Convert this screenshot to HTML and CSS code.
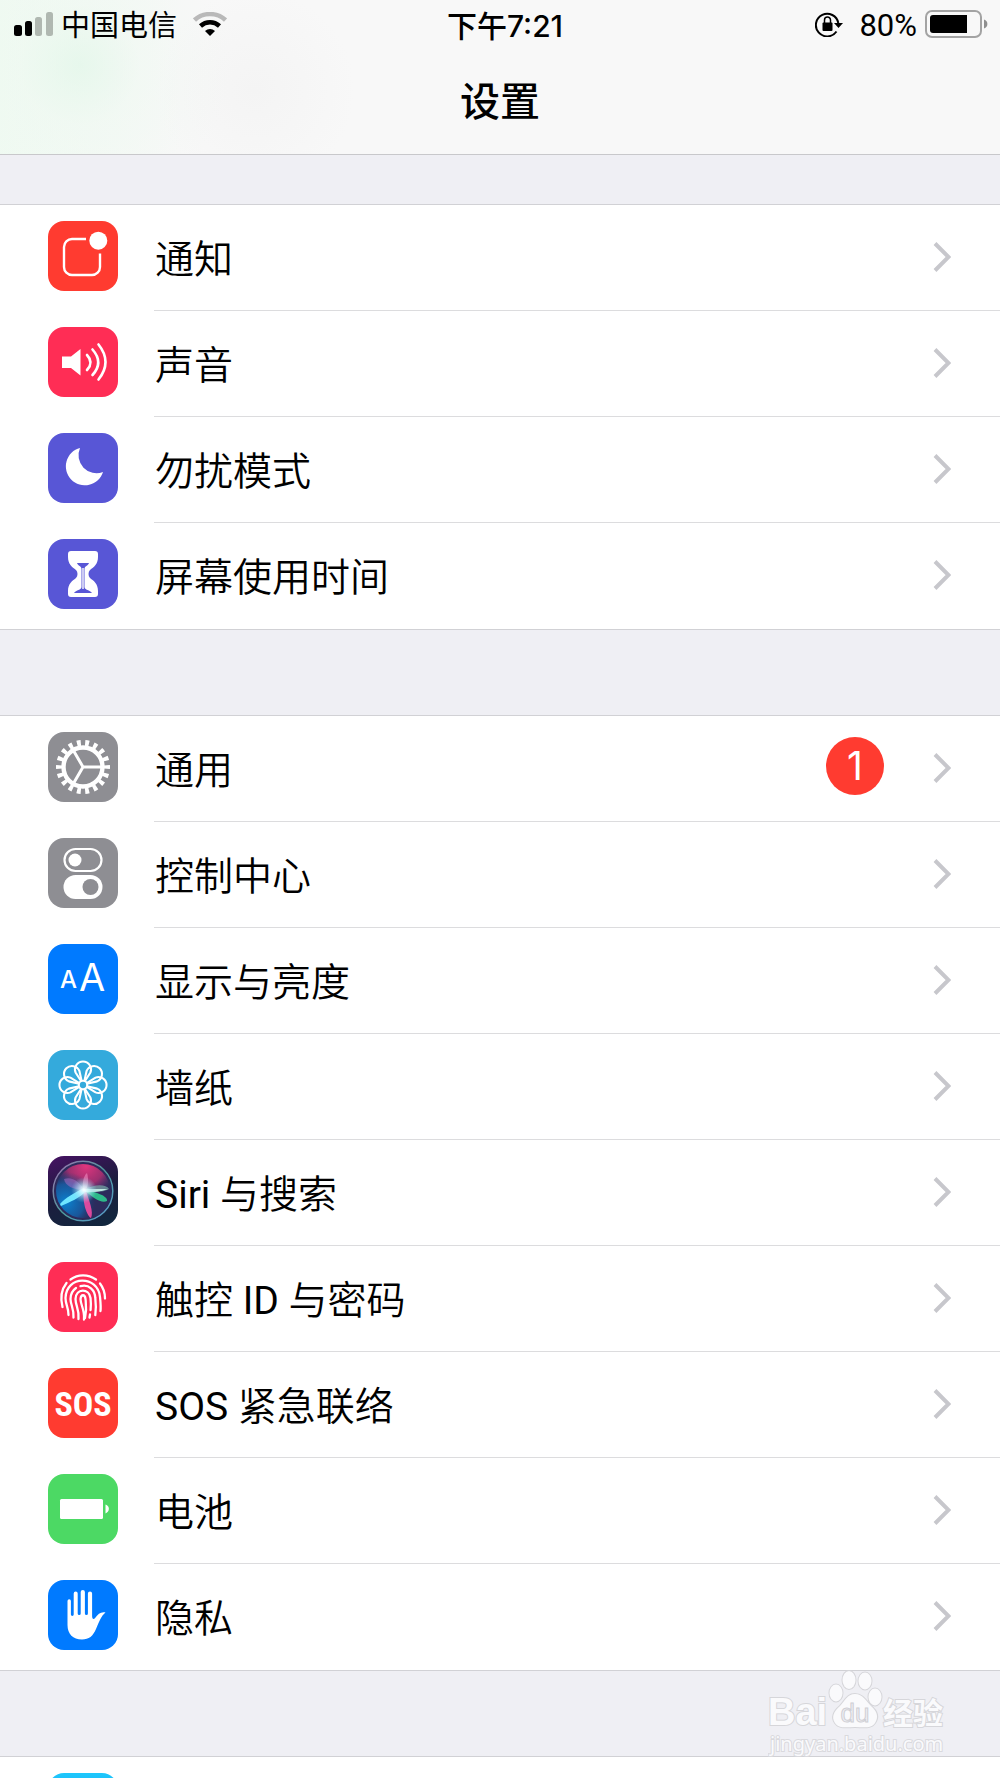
FILE: index.html
```
<!DOCTYPE html>
<html lang="zh-CN">
<head>
    <meta charset="UTF-8">
    <meta name="viewport" content="width=device-width, initial-scale=1.0">
    <title>设置</title>
    <link rel="stylesheet" href="styles.css">
</head>
<body>
    <!-- 公用箭头 -->
    <svg class="defs" aria-hidden="true">
        <symbol id="chevron" viewBox="0 0 18 30">
            <path d="M2 1.500L15.500 15L2 28.500" fill="none" stroke="#c7c7cc" stroke-width="4"/>
        </symbol>
    </svg>

    <header class="header">
        <div class="status-bar">
            <div class="status-left">
                <svg class="signal" viewBox="0 0 39 24">
                    <rect x="0" y="13" width="8" height="11" rx="2.500"/>
                    <rect x="11" y="9" width="7" height="15" rx="2.500"/>
                    <rect x="21" y="5" width="7" height="19" rx="2.500" fill="#b0b8b1"/>
                    <rect x="32" y="0" width="7" height="24" rx="2.500" fill="#b0b8b1"/>
                </svg>
                <span class="status-text">中国电信</span>
                <svg class="wifi" viewBox="0 0 34 24">
                    <path d="M1.500 8C10 .1 24 .1 32.500 8" fill="none" stroke="#b9b9b9" stroke-width="4.500"/>
                    <path d="M7.500 14C13 9 21 9 26.500 14" fill="none" stroke="#000" stroke-width="4.500"/>
                    <path d="M12 19C15 16.300 19 16.300 22 19L17 24Z"/>
                </svg>
            </div>
            <div class="status-text status-time">下午7:21</div>
            <div class="status-right">
                <svg class="lock" viewBox="0 0 28 26">
                    <path d="M21.500 20.500A11.300 11.300 0 1 1 23.300 12" fill="none" stroke="#000" stroke-width="2"/>
                    <path d="M19 12H28L23.500 17Z"/>
                    <rect x="7.500" y="11.500" width="10" height="8.500" rx="1"/>
                    <path d="M9.500 12V9a3 3 0 0 1 6 0V12" fill="none" stroke="#000" stroke-width="1.500"/>
                </svg>
                <span class="status-text">80%</span>
                <svg class="battery" viewBox="0 0 63 28">
                    <rect x="1" y="1" width="55" height="26" rx="6" fill="none" stroke="#a3a3a3" stroke-width="2"/>
                    <path d="M8 5H42V23H8a3 3 0 0 1-3-3V8a3 3 0 0 1 3-3Z"/>
                    <path d="M59 9.500C63.500 11 63.500 17 59 18.500Z" fill="#8f8f8f"/>
                </svg>
            </div>
        </div>
        <h1 class="title">设置</h1>
    </header>

    <main class="content">
        <ul class="group">
            <li><a class="row" href="#">
                <svg class="icon red" viewBox="0 0 70 70">
                    <path d="M38 18H24a8 8 0 0 0-8 8v20a8 8 0 0 0 8 8h20a8 8 0 0 0 8-8V32.500" fill="none" stroke="#fff" stroke-width="2.400"/>
                    <circle cx="50.300" cy="19.700" r="9" fill="#fff"/>
                </svg>
                <span class="row-body"><span class="label">通知</span><svg class="chevron"><use href="#chevron"/></svg></span>
            </a></li>
            <li><a class="row" href="#">
                <svg class="icon pink" viewBox="0 0 70 70">
                    <path d="M14 29.500h9l9.500-7.500v26.500L23 41h-9z" fill="#fff"/>
                    <path d="M39 28q7 7.500 0 15M44.500 22.500q11.500 13 0 25.500M50.500 17.500q14 17.500 0 35" fill="none" stroke="#fff" stroke-width="2.600" stroke-linecap="round"/>
                </svg>
                <span class="row-body"><span class="label">声音</span><svg class="chevron"><use href="#chevron"/></svg></span>
            </a></li>
            <li><a class="row" href="#">
                <svg class="icon purple" viewBox="0 0 70 70">
                    <path d="M32 15A19 19 0 1 0 55 39A18 18 0 0 1 32 15Z" fill="#fff"/>
                </svg>
                <span class="row-body"><span class="label">勿扰模式</span><svg class="chevron"><use href="#chevron"/></svg></span>
            </a></li>
            <li><a class="row" href="#">
                <svg class="icon purple" viewBox="0 0 70 70">
                    <path d="M23 12h24c2 0 3 1 3 3v3c0 7-4 10-8 13-2 2-2 6 0 8 4 3 8 6 8 13v3c0 2-1 3-3 3H23c-2 0-3-1-3-3v-3c0-7 4-10 8-13 2-2 2-6 0-8-4-3-8-6-8-13v-3c0-2 1-3 3-3z" fill="#fff"/>
                    <path d="M29 24h12c-1 3-4.500 3-4.500 6v18c0 3 5.500 3 7.500 6h-18c2-3 7.500-3 7.500-6V30c0-3-3.500-3-4.500-6z" fill="#5856d6"/>
                    <path d="M35 29v21" stroke="#fff" stroke-width="1.400"/>
                </svg>
                <span class="row-body"><span class="label">屏幕使用时间</span><svg class="chevron"><use href="#chevron"/></svg></span>
            </a></li>
        </ul>

        <ul class="group">
            <li><a class="row" href="#">
                <svg class="icon gray" viewBox="0 0 70 70">
                    <g fill="none" stroke="#fff">
                        <circle cx="35" cy="35" r="24" stroke-width="6" pathLength="180" stroke-dasharray="4.600 5.400" stroke-dashoffset="2.300"/>
                        <circle cx="35" cy="35" r="19.500" stroke-width="4.400"/>
                        <path d="M35 35H53M35 35L26 19.400M35 35L26 50.600" stroke-width="3"/>
                    </g>
                </svg>
                <span class="row-body"><span class="label">通用</span><span class="badge">1</span><svg class="chevron"><use href="#chevron"/></svg></span>
            </a></li>
            <li><a class="row" href="#">
                <svg class="icon gray" viewBox="0 0 70 70">
                    <rect x="16.500" y="11" width="37" height="22" rx="11" fill="none" stroke="#fff" stroke-width="2.200"/>
                    <circle cx="27" cy="22" r="6.500" fill="#fff"/>
                    <rect x="15.500" y="37" width="39" height="24" rx="12" fill="#fff"/>
                    <circle cx="42.500" cy="49" r="8" fill="#8e8e93"/>
                </svg>
                <span class="row-body"><span class="label">控制中心</span><svg class="chevron"><use href="#chevron"/></svg></span>
            </a></li>
            <li><a class="row" href="#">
                <svg class="icon blue" viewBox="0 0 70 70">
                    <text class="small-a" x="12" y="44">A</text>
                    <text class="big-a" x="31" y="47">A</text>
                </svg>
                <span class="row-body"><span class="label">显示与亮度</span><svg class="chevron"><use href="#chevron"/></svg></span>
            </a></li>
            <li><a class="row" href="#">
                <svg class="icon cyan" viewBox="0 0 70 70">
                    <defs>
                        <path id="petal" d="M33.200 31.300L27.600 22.500A8 8 0 1 1 42.400 22.500L36.800 31.300"/>
                    </defs>
                    <g fill="none" stroke="#fff" stroke-width="2.100">
                        <circle cx="35" cy="35" r="4.200"/>
                        <use href="#petal"/>
                        <use href="#petal" transform="rotate(45 35 35)"/>
                        <use href="#petal" transform="rotate(90 35 35)"/>
                        <use href="#petal" transform="rotate(135 35 35)"/>
                        <use href="#petal" transform="rotate(180 35 35)"/>
                        <use href="#petal" transform="rotate(225 35 35)"/>
                        <use href="#petal" transform="rotate(270 35 35)"/>
                        <use href="#petal" transform="rotate(315 35 35)"/>
                    </g>
                </svg>
                <span class="row-body"><span class="label">墙纸</span><svg class="chevron"><use href="#chevron"/></svg></span>
            </a></li>
            <li><a class="row" href="#">
                <svg class="icon siri" viewBox="0 0 70 70">
                    <defs>
                        <radialGradient id="siriPink" cx="38" cy="10" r="30" gradientUnits="userSpaceOnUse">
                            <stop offset="0" stop-color="#e0367e"/>
                            <stop offset=".6" stop-color="#b03072" stop-opacity=".85"/>
                            <stop offset="1" stop-color="#7a2f7c" stop-opacity="0"/>
                        </radialGradient>
                        <radialGradient id="siriBlue" cx="18" cy="46" r="30" gradientUnits="userSpaceOnUse">
                            <stop offset="0" stop-color="#0a82d0"/>
                            <stop offset=".6" stop-color="#1560a8" stop-opacity=".8"/>
                            <stop offset="1" stop-color="#1a3a70" stop-opacity="0"/>
                        </radialGradient>
                        <radialGradient id="siriGlow" cx="36" cy="34" r="13" gradientUnits="userSpaceOnUse">
                            <stop offset="0" stop-color="#fff"/>
                            <stop offset=".3" stop-color="#d8f8ff" stop-opacity=".8"/>
                            <stop offset="1" stop-color="#7fd0f0" stop-opacity="0"/>
                        </radialGradient>
                        <linearGradient id="siriRing" x1="0" y1="0" x2="1" y2="1">
                            <stop offset="0" stop-color="#a070b0"/>
                            <stop offset=".5" stop-color="#4f9a9c"/>
                            <stop offset="1" stop-color="#5a9ad0"/>
                        </linearGradient>
                    </defs>
                    <circle cx="35" cy="35" r="29" fill="#2c2b5c"/>
                    <circle cx="35" cy="35" r="27" fill="url(#siriPink)"/>
                    <circle cx="35" cy="35" r="27" fill="url(#siriBlue)"/>
                    <path d="M37 34C48 36 60 40 59 45C54 48 44 42 37 34Z" fill="#2ec98e" opacity=".9"/>
                    <path d="M36 34C46 28 58 28 61 33C54 37 44 36 36 34Z" fill="#78a8a8" opacity=".7"/>
                    <path d="M36 34C26 34 17 30 16 23C24 20 32 26 36 34Z" fill="#b070c8" opacity=".5"/>
                    <path d="M35 34C34 26 36 19 39 17C41 24 40 30 38 34Z" fill="#f088c0" opacity=".6"/>
                    <path d="M36 35C34 46 39 60 43 62C46 56 41 44 38 35Z" fill="#ef4ba2" opacity=".9"/>
                    <path d="M36 32C28 36 17 42 12 48L13 50C22 46 32 42 38 35Z" fill="#6fe6ff"/>
                    <path d="M37 33C46 33 54 33 60 33C54 35 46 37 37 36Z" fill="#d4fff4" opacity=".8"/>
                    <circle cx="36" cy="34" r="13" fill="url(#siriGlow)"/>
                    <circle cx="35" cy="35" r="29.800" fill="none" stroke="url(#siriRing)" stroke-width="1.500"/>
                </svg>
                <span class="row-body"><span class="label"><span class="latin">Siri </span>与搜索</span><svg class="chevron"><use href="#chevron"/></svg></span>
            </a></li>
            <li><a class="row" href="#">
                <svg class="icon pink" viewBox="0 0 70 70">
                    <g fill="none" stroke="#fff" stroke-width="2.300" stroke-linecap="round">
                        <path d="M22.500 17.500C30 12 40 12 48 17.500"/>
                        <path d="M18.500 21C13 28 12 35 14.500 45"/>
                        <path d="M52 21.500C55.500 26 57 31 57 36.500"/>
                        <path d="M20.500 53C20.500 45 17.500 43 17.500 36C18 13 50 13 52 35C52.500 40 53 44 52.500 49"/>
                        <path d="M25.500 55.500C26 46 22.500 43 22.500 37C22.500 32 24.500 28.500 28 26"/>
                        <path d="M32.500 24.200C41 22 47 28 47.300 36C48 42 48 48 47.300 53"/>
                        <path d="M30.500 57C31.500 47 27.500 44 27.500 37C28 26 41 26 42.500 36C43 40 43 44 42.600 48"/>
                        <path d="M36 57.500C37 48 32.500 43 32.500 37C33 32 37 32 37.500 37C38 42 39 47 37 56"/>
                        <path d="M42 52.500L41.500 55.500"/>
                    </g>
                </svg>
                <span class="row-body"><span class="label">触控<span class="latin"> ID </span>与密码</span><svg class="chevron"><use href="#chevron"/></svg></span>
            </a></li>
            <li><a class="row" href="#">
                <svg class="icon red" viewBox="0 0 70 70">
                    <text class="sos" x="35" y="48" text-anchor="middle">SOS</text>
                </svg>
                <span class="row-body"><span class="label"><span class="latin">SOS </span>紧急联络</span><svg class="chevron"><use href="#chevron"/></svg></span>
            </a></li>
            <li><a class="row" href="#">
                <svg class="icon green" viewBox="0 0 70 70">
                    <rect x="12" y="25" width="43" height="20" rx="1.500" fill="#fff"/>
                    <path d="M57.500 30.500C62 32 62 37.500 57.500 39.500Z" fill="#fff"/>
                </svg>
                <span class="row-body"><span class="label">电池</span><svg class="chevron"><use href="#chevron"/></svg></span>
            </a></li>
            <li><a class="row" href="#">
                <svg class="icon blue" viewBox="0 0 70 70">
                    <path d="M19.500 21a1.700 1.700 0 0 1 3.400 0V34.500a1.300 1.300 0 0 0 2.800 0V13.500a2 2 0 0 1 4 0V33.500a1.500 1.500 0 0 0 3 0V12a2.100 2.100 0 0 1 4.200 0V33.500a1.500 1.500 0 0 0 3 0V13.500a2.100 2.100 0 0 1 4.200 0V36c0 3 1.500 4 3 2C50 34 53 31.500 57.500 32.500C53 36 51 42 48 49C45 56 41 59.500 34 59.500C25 59.500 19.500 54 19.500 45Z" fill="#fff"/>
                </svg>
                <span class="row-body"><span class="label">隐私</span><svg class="chevron"><use href="#chevron"/></svg></span>
            </a></li>
        </ul>

        <ul class="group">
            <li><a class="row" href="#" aria-label="App Store">
                <svg class="icon store" viewBox="0 0 70 70"></svg>
                <span class="row-body"></span>
            </a></li>
        </ul>
    </main>

    <!-- 右下角水印 -->
    <svg class="watermark" viewBox="0 0 200 100">
        <g class="mark">
            <text class="mark-bai" x="0" y="55">Bai</text>
            <ellipse cx="68" cy="23" rx="6.500" ry="8.500"/>
            <ellipse cx="81" cy="10" rx="6.500" ry="9"/>
            <ellipse cx="97" cy="11" rx="6.500" ry="8.500"/>
            <ellipse cx="107" cy="27" rx="6.500" ry="8.500"/>
            <path d="M87 24C95 24 98 31 103 36C109 41 111 47 107 53C103 59 95 57 87 57C79 57 71 59 67 53C63 47 66 41 72 36C77 31 79 24 87 24Z"/>
            <text class="mark-cn" x="115" y="54">经验</text>
        </g>
        <text class="mark-du" x="87" y="52" text-anchor="middle">du</text>
        <text class="mark-url" x="2" y="81">jingyan.baidu.com</text>
    </svg>
</body>
</html>
```
FILE: styles.css
```
* {
    box-sizing: border-box;
}
body {
    margin: 0;
    height: 100vh;
    display: flex;
    flex-direction: column;
    overflow: hidden;
    position: relative;
    background: #efeff4;
    color: #000;
    font-family: Inter, "Noto Sans CJK SC", sans-serif;
}
.defs {
    display: none;
}

/* 顶部 */
.header {
    flex: none;
    border-bottom: 1px solid #c8c8cb;
    background:
        radial-gradient(circle at 80px 65px, rgba(222, 246, 230, 0.6), rgba(236, 248, 239, 0.4) 60px, rgba(248, 248, 248, 0) 150px),
        radial-gradient(circle at 255px 90px, #f4f4f4, rgba(248, 248, 248, 0) 100px),
        linear-gradient(to right, #f0faf2, #f8f8f8 180px);
}
.status-bar {
    display: grid;
    grid-template-columns: 1fr auto 1fr;
    align-items: center;
    height: 48px;
    padding: 0 12px 0 14px;
    font-size: 29px;
    line-height: 44px;
}
.status-left,
.status-right {
    display: flex;
    align-items: center;
}
.status-left {
    gap: 8px;
}
.status-right {
    justify-content: flex-end;
    gap: 8px;
    font-family: Roboto, sans-serif;
    font-size: 31px;
}
.status-text {
    padding-top: 4px;
}
.status-time {
    padding-left: 8px;
    font-size: 30px;
    font-weight: 500;
}
.signal {
    width: 39px;
    height: 24px;
}
.wifi {
    width: 34px;
    height: 24px;
    margin-left: 8px;
}
.lock {
    width: 28px;
    height: 26px;
    margin-right: 8px;
}
.battery {
    width: 63px;
    height: 28px;
}
.title {
    margin: 0;
    padding: 14px 0 12px;
    text-align: center;
    font-size: 40px;
    font-weight: 500;
    line-height: 80px;
}

/* 列表 */
.content {
    flex: 1;
    min-height: 0;
    padding-top: 49px;
    overflow: hidden;
}
.group {
    list-style: none;
    margin: 0 0 85px;
    padding: 0;
    background: #fff;
    border-top: 1px solid #d1d1d5;
    border-bottom: 1px solid #d1d1d5;
}
.row {
    display: flex;
    padding-left: 48px;
    gap: 36px;
    color: inherit;
    text-decoration: none;
}
.row-body {
    flex: 1;
    display: flex;
    align-items: center;
    height: 106px;
    padding: 0 49px 2px 1px;
    border-bottom: 1px solid #dcdcde;
}
.group li:last-child .row-body {
    border-bottom-color: transparent;
}
.label {
    flex: 1;
    padding-top: 6px;
    font-family: Roboto, "Noto Sans CJK SC", sans-serif;
    font-size: 39px;
    font-weight: 350;
    line-height: 60px;
}
.latin {
    font-weight: 400;
}
.chevron {
    width: 18px;
    height: 30px;
}
.badge {
    width: 58px;
    height: 58px;
    margin-right: 49px;
    margin-bottom: 4px;
    border-radius: 50%;
    background: #ff3b30;
    color: #fff;
    font-size: 39px;
    line-height: 58px;
    text-align: center;
}

/* 图标 */
.icon {
    flex: none;
    width: 70px;
    height: 70px;
    margin-top: 16px;
    border-radius: 16px;
}
.red { background: #ff3b30; }
.pink { background: #ff2d55; }
.purple { background: #5856d6; }
.gray { background: #8e8e93; }
.blue { background: #007aff; }
.cyan { background: #34aadc; }
.green { background: #4cd964; }
.siri { background: linear-gradient(160deg, #471263, #1c1d3e 50%, #10283e); }
.store { background: linear-gradient(#1dc8fc, #1d77f2); }
.icon text {
    fill: #fff;
}
.small-a {
    font-size: 24px;
    font-weight: 500;
}
.big-a {
    font-size: 38px;
}
.sos {
    font-family: "Liberation Sans Narrow", "Roboto Condensed", "Open Sans Condensed", Roboto, sans-serif;
    font-size: 34px;
    font-weight: bold;
}

/* 水印 */
.watermark {
    position: absolute;
    right: 32px;
    bottom: 8px;
    width: 200px;
    height: 100px;
    pointer-events: none;
}
.mark {
    fill: #fafafc;
    stroke: #d6d6da;
    stroke-width: 2;
    paint-order: stroke;
}
.mark-bai {
    font-family: "Liberation Sans", sans-serif;
    font-size: 38px;
    font-weight: bold;
}
.mark-cn {
    font-size: 30px;
    font-weight: bold;
}
.mark-du {
    font-family: "Liberation Sans", sans-serif;
    font-size: 26px;
    fill: #f0f0f4;
    stroke: #cfcfd4;
    stroke-width: 1;
}
.mark-url {
    font-family: "Noto Sans", sans-serif;
    font-size: 20px;
    fill: #fafafc;
    stroke: #d9d9dd;
    stroke-width: 2;
    paint-order: stroke;
}
```
